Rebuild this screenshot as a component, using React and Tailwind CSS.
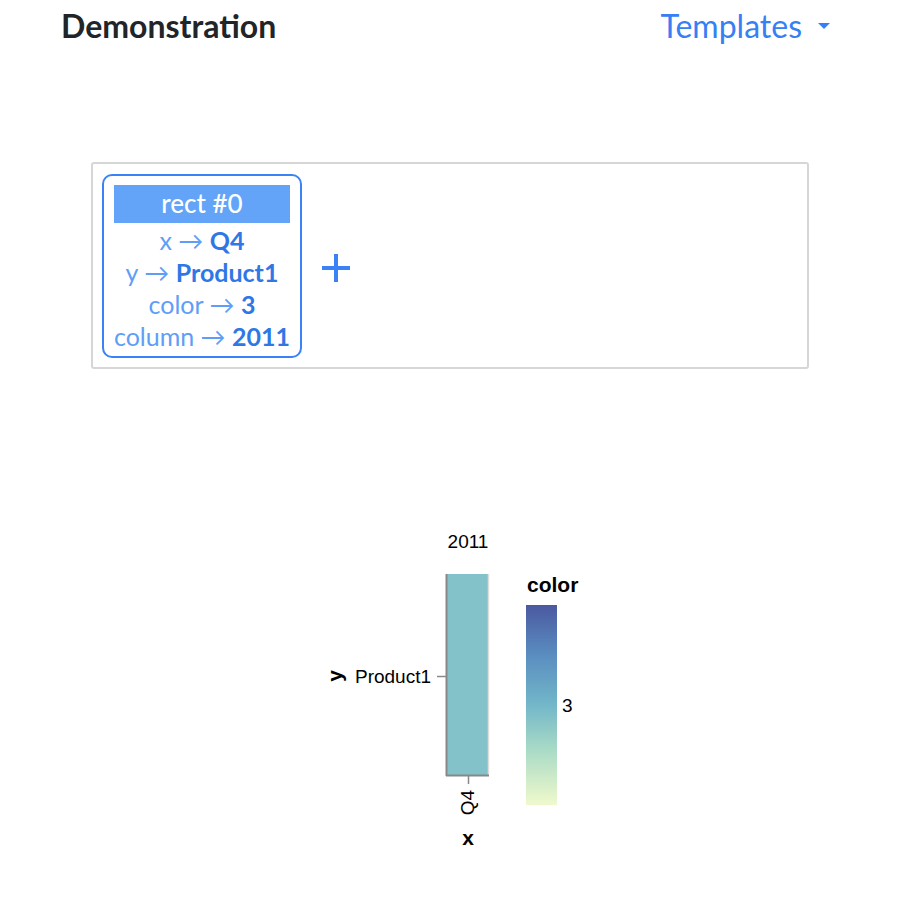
import React from "react";

/* ===============================
   DATA
=============================== */
const mappings = [
  { key: "x", value: "Q4" },
  { key: "y", value: "Product1" },
  { key: "color", value: "3" },
  { key: "column", value: "2011" },
];

const lato = { fontFamily: "Lato, 'Noto Sans', sans-serif" };

export default function App() {
  return (
    <div className="w-[900px] min-h-[920px] bg-white" style={lato}>
      {/* ===============================
         HEADER
      =============================== */}
      <div className="flex items-center justify-between pl-[61px] pr-[70px] pt-[6px]">
        <h1 className="text-[32px] font-bold text-[#212529] leading-[40px]">
          Demonstration
        </h1>
        <button className="flex items-center gap-[16px] text-[32px] text-[#3680f3] leading-[40px]">
          Templates
          <svg width="12" height="7" viewBox="0 0 12 7">
            <path d="M0 0 L12 0 L6 6 Z" fill="#3680f3" />
          </svg>
        </button>
      </div>

      {/* ===============================
         MARK MAPPINGS BOX
      =============================== */}
      <div className="ml-[91px] mt-[116px] w-[718px] h-[207px] border-2 border-[#d6d6d6] rounded-[3px] flex items-center pl-[9px]">
        <div className="w-[200px] border-2 border-[#3b82f6] rounded-[10px] px-[10px] pt-[9px] pb-[4px] flex flex-col items-center">
          <div className="w-full h-[38px] bg-[#63a4f8] text-white text-[26px] font-medium flex items-center justify-center">
            rect #0
          </div>
          <div className="flex flex-col items-center text-[25px] leading-[32px] mt-[1px]">
            {mappings.map((m) => (
              <div key={m.key} className="whitespace-nowrap">
                <span className="text-[#5e9ef7]">{m.key}</span>
                <span className="text-[#5e9ef7]"> → </span>
                <span className="text-[#2f77e6] font-bold">{m.value}</span>
              </div>
            ))}
          </div>
        </div>
        <svg className="ml-[18px] mt-[4px]" width="32" height="32" viewBox="0 0 32 32">
          <path d="M16 2 V30 M2 16 H30" stroke="#3b82f6" strokeWidth="4" />
        </svg>
      </div>

      {/* ===============================
         CHART
      =============================== */}
      <div className="ml-[320px] mt-[151px]">
        <Chart />
      </div>
    </div>
  );
}

/* ===============================
   CHART (vega-lite style heatmap)
=============================== */
function Chart() {
  const font = "'Liberation Sans', Arial, sans-serif";
  return (
    <svg width="280" height="340" viewBox="0 0 280 340" style={{ fontFamily: font }}>
      <defs>
        <linearGradient id="legend" x1="0" y1="1" x2="0" y2="0">
          <stop offset="0%" stopColor="#f0f9cc" />
          <stop offset="28%" stopColor="#a8dac6" />
          <stop offset="50%" stopColor="#73b7c9" />
          <stop offset="75%" stopColor="#5a8dc0" />
          <stop offset="100%" stopColor="#4b59a0" />
        </linearGradient>
      </defs>

      {/* column header */}
      <text x="148" y="28" fontSize="19" textAnchor="middle" fill="#000">
        2011
      </text>

      {/* cell */}
      <rect x="127" y="54" width="42" height="201" fill="#84c2ca" />
      <line x1="168.5" y1="54" x2="168.5" y2="255" stroke="#dddddd" strokeWidth="1.5" />
      <line x1="126.5" y1="54" x2="126.5" y2="256" stroke="#888888" strokeWidth="2" />
      <line x1="126" y1="255.5" x2="169" y2="255.5" stroke="#888888" strokeWidth="2" />

      {/* y axis */}
      <line x1="117" y1="156.5" x2="126" y2="156.5" stroke="#888888" strokeWidth="1.5" />
      <text x="111" y="163" fontSize="19" textAnchor="end" fill="#000">
        Product1
      </text>
      <text
        transform="translate(22,156) rotate(-90)"
        fontSize="21"
        fontWeight="bold"
        textAnchor="middle"
        fill="#000"
      >
        y
      </text>

      {/* x axis */}
      <line x1="148.5" y1="256" x2="148.5" y2="264" stroke="#888888" strokeWidth="1.5" />
      <text
        transform="translate(154,270) rotate(-90)"
        fontSize="19"
        textAnchor="end"
        fill="#000"
      >
        Q4
      </text>
      <text x="148" y="325" fontSize="21" fontWeight="bold" textAnchor="middle" fill="#000">
        x
      </text>

      {/* legend */}
      <text x="207" y="72" fontSize="21" fontWeight="bold" fill="#000">
        color
      </text>
      <rect x="206" y="85" width="31" height="200" fill="url(#legend)" />
      <text x="242" y="192" fontSize="19" fill="#000">
        3
      </text>
    </svg>
  );
}
